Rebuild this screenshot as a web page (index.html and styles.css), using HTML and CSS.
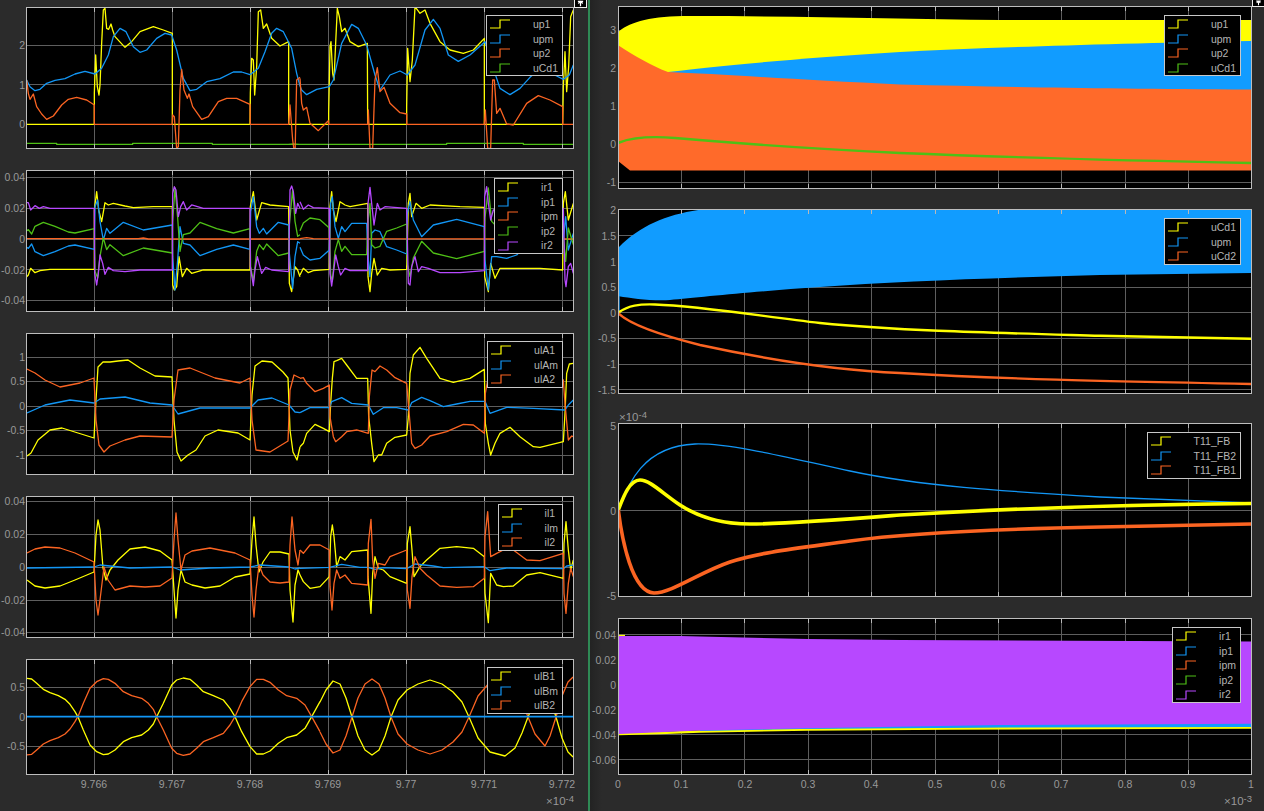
FILE: index.html
```html
<!doctype html>
<html lang="en">
<head>
  <meta charset="UTF-8">
  <meta name="viewport" content="width=device-width, initial-scale=1.0">
  <title>Scope</title>
  <link rel="stylesheet" href="styles.css">
</head>
<body>
<main class="scope">

  <!-- left pane: zoomed-in waveforms -->
  <section class="pane pane-left">
    <button class="undock"><svg viewBox="0 0 12 8"><path d="M6 7V2M3.5 4 6 1.5 8.5 4M3 1.5h6"/></svg></button>

    <figure class="plot">
      <svg class="axes" width="574" height="142" viewBox="0 7 574 142">
        <defs>
          <path id="l1x" d="M94.5 8V148M172.5 8V148M250.5 8V148M328.5 8V148M406.5 8V148M484.5 8V148M562.5 8V148"/>
          <path id="l1y" d="M27 45.5H573M27 84.5H573M27 124.5H573"/>
        </defs>
        <rect class="bg" x="26" y="7" width="548" height="142"/>
        <use href="#l1x" class="grid"/><use href="#l1y" class="grid"/>
        <svg x="27" y="8" width="546" height="140" viewBox="27 8 546 140">
          <g transform="scale(.33333)">
            <polyline class="line green" points="80,430 170,430 170,433 398,433 398,430 637,430 637,433 865,433 880,432 900,433"/>
            <polyline class="line yellow" points="80,373 283,373 283,280 287,165 292,260 297,285 300,255 305,130 310,30 315,25 320,85 326,88 333,72 338,90 345,110 375,142 395,125 420,95 460,80 490,90 517,100 517,373 750,373 751,280 755,175 760,180 764,285 770,200 775,35 782,30 790,85 800,72 815,115 840,138 866,125 866,373 900,373"/>
            <polyline class="line blue" points="80,240 90,260 105,272 120,268 140,250 165,241 195,236 225,222 255,214 285,222 305,205 325,165 340,110 360,85 378,95 400,140 420,157 440,150 470,115 495,100 515,105 530,150 550,235 570,272 590,268 620,245 660,236 700,216 725,216 750,224 775,205 795,155 815,100 830,85 850,95 875,145 890,220 900,258"/>
            <polyline class="line orange" points="80,240 85,280 90,298 100,282 110,320 125,342 140,358 160,348 185,315 205,298 230,292 260,300 283,315 283,373 517,373 518,345 523,350 530,446 535,440 540,270 545,208 552,270 562,295 567,282 578,320 605,358 625,350 655,305 680,295 710,295 750,313 751,373 866,373 870,315 878,420 885,470 890,240 900,232"/>
          </g>
          <g transform="translate(300 0) scale(.33333)">
            <polyline class="line green" points="0,433 440,433 440,430 670,430 670,433 820,433"/>
            <polyline class="line yellow" points="0,373 86,373 86,340 90,140 93,125 98,220 102,240 106,150 112,25 118,50 125,95 135,85 150,125 175,140 202,130 203,373 320,373 320,320 323,145 330,245 337,180 345,20 360,40 375,30 390,70 420,125 450,150 490,160 520,150 553,115 553,373 788,373 790,260 795,155 800,275 806,200 812,50 820,30"/>
            <polyline class="line blue" points="0,258 5,270 20,284 50,268 88,260 100,240 125,130 155,73 175,85 200,135 225,225 240,270 270,225 300,213 322,225 345,195 375,90 400,58 420,85 445,165 475,184 510,165 555,125 575,190 600,265 630,284 660,265 690,232 720,205 770,228 790,238 808,225 820,195"/>
            <polyline class="line orange" points="0,235 5,310 10,330 20,322 30,370 55,392 85,362 86,373 203,373 205,330 210,445 218,445 225,240 232,203 240,275 252,262 270,310 300,338 320,342 320,373 553,373 556,330 563,445 572,445 578,240 583,240 590,340 600,325 620,372 640,375 680,310 715,287 750,300 788,320 788,373 820,373"/>
          </g>
        </svg>
        <use href="#l1x" class="ticks" stroke-dasharray="4 132 4"/>
        <rect class="box" x="26.5" y="7.5" width="547" height="141"/>
        <text class="tick ylab" x="25" y="45">2</text>
        <text class="tick ylab" x="25" y="84.5">1</text>
        <text class="tick ylab" x="25" y="124">0</text>
      </svg>
      <div class="legend">
        <div class="entry"><svg class="key yellow"><path d="M0 9H10V1H20"/></svg><span>up1</span></div>
        <div class="entry"><svg class="key blue"><path d="M0 9H10V1H20"/></svg><span>upm</span></div>
        <div class="entry"><svg class="key orange"><path d="M0 9H10V1H20"/></svg><span>up2</span></div>
        <div class="entry"><svg class="key green"><path d="M0 9H10V1H20"/></svg><span>uCd1</span></div>
      </div>
    </figure>

    <figure class="plot">
      <svg class="axes" width="574" height="142" viewBox="0 170 574 142">
        <defs>
          <path id="l2x" d="M94.5 171V311M172.5 171V311M250.5 171V311M328.5 171V311M406.5 171V311M484.5 171V311M562.5 171V311"/>
          <path id="l2y" d="M27 177.5H573M27 208.5H573M27 239.5H573M27 269.5H573M27 300.5H573"/>
        </defs>
        <rect class="bg" x="26" y="170" width="548" height="142"/>
        <use href="#l2x" class="grid"/><use href="#l2y" class="grid"/>
        <svg x="27" y="171" width="546" height="140" viewBox="27 171 546 140">
          <g transform="translate(0 160) scale(.33333)">
            <polyline class="line yellow" points="80,350 85,345 92,325 105,338 120,332 150,328 283,328 283,150 290,95 296,150 305,185 315,128 325,135 340,130 375,138 400,143 460,140 517,140 518,375 523,390 530,380 537,290 547,350 560,325 575,340 610,330 750,330 751,140 760,95 770,180 785,128 810,135 866,140 868,370 875,395 885,320 893,330 900,350"/>
            <polyline class="line blue" points="80,262 85,265 95,252 105,275 130,287 165,275 205,258 225,255 283,268 285,140 293,120 300,185 310,240 320,205 330,220 370,187 430,210 517,195 518,290 525,390 533,300 540,200 550,250 570,255 600,287 650,268 700,255 750,268 752,155 760,110 770,200 778,220 790,205 800,222 835,187 866,195 868,280 878,385 885,290 893,245 900,250"/>
            <polyline class="line orange" points="80,236 415,236 430,234 445,237 900,237"/>
            <polyline class="line green" points="80,212 85,209 95,222 105,199 130,187 165,199 205,216 225,219 283,206 285,334 293,354 300,289 310,234 320,269 330,254 370,287 430,264 517,279 518,184 525,84 533,174 540,274 550,224 570,219 600,187 650,206 700,219 750,206 752,319 760,364 770,274 778,254 790,269 800,252 835,287 866,279 868,194 878,89 885,184 893,229 900,224"/>
            <polyline class="line purple" points="80,128 85,128 92,150 105,137 118,145 130,140 150,145 283,145 284,340 290,375 295,340 300,285 308,310 315,343 325,322 340,332 375,335 420,330 517,330 518,100 523,80 528,90 535,170 542,140 550,125 560,150 575,135 610,145 750,145 751,320 760,377 765,330 772,290 785,340 797,322 815,330 866,335 870,90 875,78 880,95 887,160 893,130 900,145"/>
          </g>
          <g transform="translate(300 160) scale(.33333)">
            <polyline class="line yellow" points="0,345 10,325 25,338 40,332 88,328 90,140 95,95 100,150 108,185 120,125 135,135 150,140 203,130 204,350 210,395 215,340 222,295 232,345 245,325 270,330 320,328 325,130 330,100 335,170 348,130 365,145 390,135 480,140 553,142 554,350 565,395 572,310 585,355 600,325 650,325 720,325 788,330 790,130 796,95 805,180 820,130"/>
            <polyline class="line blue" points="0,262 10,285 30,300 60,295 88,270 92,130 97,110 105,200 115,235 125,200 135,215 155,190 200,190 204,290 210,350 215,220 225,210 240,215 260,260 290,270 320,282 322,160 330,125 340,180 365,230 400,195 470,178 553,200 555,300 565,390 575,290 590,290 620,295 650,285 700,230 790,240 797,170 805,270 820,220"/>
            <polyline class="line orange" points="0,236 20,233 40,236 820,237"/>
            <polyline class="line green" points="0,212 10,189 30,174 60,179 88,204 92,344 97,364 105,274 115,239 125,274 135,259 155,284 200,284 204,184 210,130 215,254 225,264 240,259 260,214 290,204 320,192 322,314 330,349 340,294 365,244 400,279 470,296 553,274 555,174 565,84 575,184 600,210 790,234 797,304 805,204 820,254"/>
            <polyline class="line purple" points="0,125 10,148 25,135 40,143 88,145 90,340 95,378 100,340 107,285 115,320 122,345 135,325 150,332 203,332 204,130 210,82 215,130 222,195 232,130 240,150 255,140 320,145 325,370 330,375 335,320 345,290 355,335 365,320 385,325 420,338 480,338 553,332 554,110 560,80 565,130 572,180 580,150 790,145 795,360 798,380 805,320 812,310 820,340"/>
          </g>
        </svg>
        <use href="#l2x" class="ticks" stroke-dasharray="4 132 4"/>
        <rect class="box" x="26.5" y="170.5" width="547" height="141"/>
        <text class="tick ylab" x="25" y="177">0.04</text>
        <text class="tick ylab" x="25" y="208">0.02</text>
        <text class="tick ylab" x="25" y="239">0</text>
        <text class="tick ylab" x="25" y="270">-0.02</text>
        <text class="tick ylab" x="25" y="300">-0.04</text>
      </svg>
      <div class="legend">
        <div class="entry"><svg class="key yellow"><path d="M0 9H10V1H20"/></svg><span>ir1</span></div>
        <div class="entry"><svg class="key blue"><path d="M0 9H10V1H20"/></svg><span>ip1</span></div>
        <div class="entry"><svg class="key orange"><path d="M0 9H10V1H20"/></svg><span>ipm</span></div>
        <div class="entry"><svg class="key green"><path d="M0 9H10V1H20"/></svg><span>ip2</span></div>
        <div class="entry"><svg class="key purple"><path d="M0 9H10V1H20"/></svg><span>ir2</span></div>
      </div>
    </figure>

    <figure class="plot">
      <svg class="axes" width="574" height="142" viewBox="0 333 574 142">
        <defs>
          <path id="l3x" d="M94.5 334V474M172.5 334V474M250.5 334V474M328.5 334V474M406.5 334V474M484.5 334V474M562.5 334V474"/>
          <path id="l3y" d="M27 357.5H573M27 381.5H573M27 406.5H573M27 430.5H573M27 455.5H573"/>
        </defs>
        <rect class="bg" x="26" y="333" width="548" height="142"/>
        <use href="#l3x" class="grid"/><use href="#l3y" class="grid"/>
        <svg x="27" y="334" width="546" height="140" viewBox="27 334 546 140">
          <polyline class="line yellow" points="27,456 31,453 38,440 50,430 62,428 78,433 94,438 96,400 98,367 103,362 110,362 118,361 128,360 140,368 155,376 172,377 174,420 177,452 181,461 188,455 196,450 205,436 218,430 238,433 250,440 252,395 255,366 262,361 272,362 283,372 288,378 290,430 293,452 297,460 300,447"/>
          <polyline class="line blue" points="27,413 45,405 70,400 94,403 100,399 125,397 150,403 172,405 178,414 200,408 250,408 258,400 272,398 289,405 295,412 300,412.7"/>
          <polyline class="line orange" points="27,369 35,373 45,380 60,387 80,383 94,378 96,420 99,445 104,452 110,446 125,440 140,436 172,437 174,400 178,370 190,368 215,378 240,383 250,378 252,420 256,450 270,452 288,441 290,390 294,375 300,378"/>
          <g transform="translate(300 330) scale(.33333)">
            <polyline class="line yellow" points="0,350 10,340 20,310 45,283 70,295 88,305 92,220 97,145 102,95 110,92 125,85 140,105 170,145 203,145 206,260 215,340 222,395 235,375 245,375 260,340 285,322 320,315 325,260 330,130 340,75 360,52 380,85 420,145 460,157 510,145 553,118 556,280 565,340 572,375 585,340 600,310 630,292 660,320 700,350 720,352 790,335 795,250 800,130 808,102 820,100"/>
            <polyline class="line blue" points="0,248 30,233 88,233 95,215 125,203 155,220 205,225 220,253 250,233 290,233 325,240 335,218 365,202 390,212 430,230 470,222 510,214 555,214 570,250 620,232 700,235 795,240 805,225 820,210"/>
            <polyline class="line orange" points="0,145 10,143 20,160 45,185 70,175 88,165 90,260 100,320 107,335 125,320 140,305 170,300 205,310 208,200 216,120 225,125 240,108 260,120 285,143 320,160 325,220 335,340 345,355 365,345 390,318 440,305 490,283 520,285 553,310 556,190 565,140 600,100 790,150 795,220 805,330 815,318 820,320"/>
          </g>
        </svg>
        <use href="#l3x" class="ticks" stroke-dasharray="4 132 4"/>
        <rect class="box" x="26.5" y="333.5" width="547" height="141"/>
        <text class="tick ylab" x="25" y="357">1</text>
        <text class="tick ylab" x="25" y="381">0.5</text>
        <text class="tick ylab" x="25" y="406">0</text>
        <text class="tick ylab" x="25" y="430">-0.5</text>
        <text class="tick ylab" x="25" y="455">-1</text>
      </svg>
      <div class="legend">
        <div class="entry"><svg class="key yellow"><path d="M0 9H10V1H20"/></svg><span>ulA1</span></div>
        <div class="entry"><svg class="key blue"><path d="M0 9H10V1H20"/></svg><span>ulAm</span></div>
        <div class="entry"><svg class="key orange"><path d="M0 9H10V1H20"/></svg><span>ulA2</span></div>
      </div>
    </figure>

    <figure class="plot">
      <svg class="axes" width="574" height="142" viewBox="0 496 574 142">
        <defs>
          <path id="l4x" d="M94.5 497V637M172.5 497V637M250.5 497V637M328.5 497V637M406.5 497V637M484.5 497V637M562.5 497V637"/>
          <path id="l4y" d="M27 501.5H573M27 534.5H573M27 567.5H573M27 600.5H573M27 632.5H573"/>
        </defs>
        <rect class="bg" x="26" y="496" width="548" height="142"/>
        <use href="#l4x" class="grid"/><use href="#l4y" class="grid"/>
        <svg x="27" y="497" width="546" height="140" viewBox="27 497 546 140">
          <polyline class="line yellow" points="27,580 35,586 45,588 60,586 75,580 94,572 96,535 98,520 100,530 103,568 106,580 110,570 118,560 130,549 145,547 160,551 172,560 174,590 176,618 178,590 181,570 185,582 192,585 205,588 220,586 235,577 250,574 252,540 254,517 256,545 259,572 263,562 270,552 280,552 289,554 290,590 293,622 295,585 298,570 300,575"/>
          <polyline class="line blue" points="27,568 94,567 100,565 130,568 172,567 180,570 210,568 250,567 260,565 289,567 295,569 300,568"/>
          <polyline class="line orange" points="27,553 35,549 45,547 60,548 75,553 94,562 96,600 98,615 100,600 104,567 108,580 115,590 130,586 145,587 160,586 172,578 174,540 176,513 178,540 181,570 185,555 192,551 210,548 235,553 250,560 252,595 254,617 256,590 259,565 263,575 270,582 280,583 289,582 290,545 292,517 295,550 298,565 300,550"/>
          <g transform="translate(300 330) scale(.33333)">
            <polyline class="line yellow" points="0,735 10,755 30,775 60,770 88,740 92,620 97,585 102,620 110,710 120,680 135,690 155,665 203,660 204,740 213,850 218,730 225,680 235,715 250,720 270,740 320,760 322,640 330,590 336,660 342,740 360,710 380,690 420,655 470,650 520,655 553,680 555,790 565,878 572,730 590,765 610,770 640,768 680,735 720,728 790,745 792,640 798,575 805,660 812,720 820,690"/>
            <polyline class="line blue" points="0,715 88,712 125,703 180,712 205,712 225,718 250,713 320,716 345,702 400,708 430,713 553,710 570,722 620,714 790,716 800,708 820,705"/>
            <polyline class="line orange" points="0,660 10,670 30,645 60,645 88,660 90,770 96,840 102,760 110,720 120,745 135,735 155,760 203,765 205,640 213,568 218,690 225,745 235,700 255,705 270,680 320,660 322,780 330,835 336,740 345,680 360,715 380,735 420,768 470,772 520,770 553,745 555,620 563,545 572,680 590,670 610,660 640,660 680,690 720,692 790,670 792,790 798,850 805,760 812,715 820,740"/>
          </g>
        </svg>
        <use href="#l4x" class="ticks" stroke-dasharray="4 132 4"/>
        <rect class="box" x="26.5" y="496.5" width="547" height="141"/>
        <text class="tick ylab" x="25" y="501">0.04</text>
        <text class="tick ylab" x="25" y="534">0.02</text>
        <text class="tick ylab" x="25" y="567">0</text>
        <text class="tick ylab" x="25" y="600">-0.02</text>
        <text class="tick ylab" x="25" y="632">-0.04</text>
      </svg>
      <div class="legend">
        <div class="entry"><svg class="key yellow"><path d="M0 9H10V1H20"/></svg><span>il1</span></div>
        <div class="entry"><svg class="key blue"><path d="M0 9H10V1H20"/></svg><span>ilm</span></div>
        <div class="entry"><svg class="key orange"><path d="M0 9H10V1H20"/></svg><span>il2</span></div>
      </div>
    </figure>

    <figure class="plot">
      <svg class="axes" width="574" height="116" viewBox="0 659 574 116">
        <defs>
          <path id="l5x" d="M94.5 660V774M172.5 660V774M250.5 660V774M328.5 660V774M406.5 660V774M484.5 660V774M562.5 660V774"/>
          <path id="l5y" d="M27 687.5H573M27 746.5H573"/>
        </defs>
        <rect class="bg" x="26" y="659" width="548" height="116"/>
        <use href="#l5x" class="grid"/><use href="#l5y" class="grid"/>
        <svg x="27" y="660" width="546" height="114" viewBox="27 660 546 114">
          <g transform="translate(0 650) scale(.33333)">
            <polyline class="line yellow" points="80,85 95,87 110,100 130,118 150,128 175,137 195,148 210,163 225,185 235,203 250,240 270,285 290,305 310,314 325,312 345,300 370,275 395,263 425,255 445,240 460,222 470,200 490,160 515,105 530,90 550,84 570,88 590,105 610,125 640,137 670,150 690,175 705,200 725,245 750,290 770,312 790,312 810,303 835,280 860,263 890,255 915,235 935,200 960,155"/>
            <polyline class="line orange" points="80,315 95,313 110,300 130,282 150,272 175,263 195,252 210,237 225,215 235,197 250,160 270,115 290,95 310,86 325,88 345,100 370,125 395,137 425,145 445,160 460,178 470,200 490,240 515,295 530,310 550,316 570,312 590,295 610,275 640,263 670,250 690,225 705,200 725,155 750,110 770,88 790,88 810,97 835,120 860,137 890,145 915,165 935,200 960,245"/>
          </g>
          <polyline class="line yellow" points="320,702 326,690 333,681 340,684 346,698 352,717 358,736 365,750 372,755 379,750 385,736 391,717 398,700 407,690 418,684 430,680 442,684 453,692 462,702 469,717 478,738 490,752 505,756 515,748 522,733 528,717 535,700 545,688 550,698 556,717 562,738 568,752 573,757"/>
          <polyline class="line orange" points="320,732 326,744 333,753 340,750 346,736 352,717 358,698 365,684 372,679 379,684 385,698 391,717 398,734 407,744 418,750 430,754 442,750 453,742 462,732 469,717 478,696 490,682 505,678 515,686 522,701 528,717 535,734 545,746 550,736 556,717 562,696 568,682 573,677"/>
          <path class="line blue thick" d="M27 716.7H573"/>
        </svg>
        <use href="#l5x" class="ticks" stroke-dasharray="4 106 4"/>
        <rect class="box" x="26.5" y="659.5" width="547" height="115"/>
        <text class="tick ylab" x="25" y="687">0.5</text>
        <text class="tick ylab" x="25" y="717">0</text>
        <text class="tick ylab" x="25" y="746">-0.5</text>
        <text class="tick xlab" x="94" y="784">9.766</text>
        <text class="tick xlab" x="172" y="784">9.767</text>
        <text class="tick xlab" x="250" y="784">9.768</text>
        <text class="tick xlab" x="328" y="784">9.769</text>
        <text class="tick xlab" x="406" y="784">9.77</text>
        <text class="tick xlab" x="484" y="784">9.771</text>
        <text class="tick xlab" x="562" y="784">9.772</text>
        <text class="tick ylab mult" x="574" y="801">&#215;10<tspan class="exp" dy="-3">-4</tspan></text>
      </svg>
      <div class="legend">
        <div class="entry"><svg class="key yellow"><path d="M0 9H10V1H20"/></svg><span>ulB1</span></div>
        <div class="entry"><svg class="key blue"><path d="M0 9H10V1H20"/></svg><span>ulBm</span></div>
        <div class="entry"><svg class="key orange"><path d="M0 9H10V1H20"/></svg><span>ulB2</span></div>
      </div>
    </figure>
  </section>

  <div class="divider"></div>

  <!-- right pane: full run -->
  <section class="pane pane-right">
    <button class="undock"><svg viewBox="0 0 12 8"><path d="M6 7V2M3.5 4 6 1.5 8.5 4M3 1.5h6"/></svg></button>

    <figure class="plot plot-r1">
      <svg class="axes" width="662" height="183" viewBox="590 6 662 183">
        <defs>
          <path id="rx1" d="M681.5 7V188M744.5 7V188M808.5 7V188M871.5 7V188M935.5 7V188M998.5 7V188M1061.5 7V188M1125.5 7V188M1188.5 7V188"/>
          <path id="ry1" d="M619 30.5H1251M619 68.5H1251M619 106.5H1251M619 144.5H1251M619 182.5H1251"/>
        </defs>
        <rect class="bg" x="618" y="6" width="634" height="183"/>
        <use href="#rx1" class="grid"/><use href="#ry1" class="grid"/>
        <svg x="619" y="7" width="632" height="181" viewBox="619 7 632 181">
          <path class="fill-yellow" d="M618 32C630 22 650 16 690 16C800 16 900 19 1000 20H1252V76H618Z"/>
          <path class="fill-blue" d="M668 72C720 66 800 58 900 52C1000 47 1100 44 1252 41V100H668Z"/>
          <path class="fill-orange" d="M618 45C635 56 650 65 668 72C720 74 800 80 900 84.5C1000 87 1100 88.5 1252 89.5V170.5H630L618 161Z"/>
          <path class="line green mid" d="M618 143C630 138 650 136 675 138C720 142 800 148 900 153C1000 157 1100 160 1252 163"/>
        </svg>
        <use href="#rx1" class="ticks" stroke-dasharray="4 173 4"/>
        <rect class="box" x="618.5" y="6.5" width="633" height="182"/>
        <text class="tick ylab" x="616" y="30">3</text>
        <text class="tick ylab" x="616" y="68">2</text>
        <text class="tick ylab" x="616" y="106">1</text>
        <text class="tick ylab" x="616" y="144">0</text>
        <text class="tick ylab" x="616" y="182">-1</text>
      </svg>
      <div class="legend">
        <div class="entry"><svg class="key yellow"><path d="M0 9H10V1H20"/></svg><span>up1</span></div>
        <div class="entry"><svg class="key blue"><path d="M0 9H10V1H20"/></svg><span>upm</span></div>
        <div class="entry"><svg class="key orange"><path d="M0 9H10V1H20"/></svg><span>up2</span></div>
        <div class="entry"><svg class="key green"><path d="M0 9H10V1H20"/></svg><span>uCd1</span></div>
      </div>
    </figure>

    <figure class="plot plot-r2">
      <svg class="axes" width="662" height="185" viewBox="590 209 662 185">
        <defs>
          <path id="rx2" d="M681.5 210V393M744.5 210V393M808.5 210V393M871.5 210V393M935.5 210V393M998.5 210V393M1061.5 210V393M1125.5 210V393M1188.5 210V393"/>
          <path id="ry2" d="M619 235.5H1251M619 261.5H1251M619 287.5H1251M619 312.5H1251M619 338.5H1251M619 364.5H1251M619 389.5H1251"/>
        </defs>
        <rect class="bg" x="618" y="209" width="634" height="185"/>
        <use href="#rx2" class="grid"/><use href="#ry2" class="grid"/>
        <svg x="619" y="210" width="632" height="183" viewBox="619 210 632 183">
          <path class="fill-blue" d="M618 248C640 225 670 213 706 209H1252V273L1100 275C1000 278 900 281 820 287C760 291 700 297 670 300C650 301 630 298 618 296Z"/>
          <path class="line blue" d="M619 296V313"/>
          <path class="line yellow mid" d="M618 313C628 305 640 304 655 304.5C700 306 760 316 820 323C900 331 1000 333 1100 335.7L1252 338.7"/>
          <path class="line orange mid" d="M618 313C630 325 660 335 700 345C760 358 830 370 900 373C1000 379 1100 381 1252 384"/>
        </svg>
        <use href="#rx2" class="ticks" stroke-dasharray="4 175 4"/>
        <rect class="box" x="618.5" y="209.5" width="633" height="184"/>
        <text class="tick ylab" x="616" y="210">2</text>
        <text class="tick ylab" x="616" y="236">1.5</text>
        <text class="tick ylab" x="616" y="262">1</text>
        <text class="tick ylab" x="616" y="287">0.5</text>
        <text class="tick ylab" x="616" y="313">0</text>
        <text class="tick ylab" x="616" y="338">-0.5</text>
        <text class="tick ylab" x="616" y="364">-1</text>
        <text class="tick ylab" x="616" y="390">-1.5</text>
      </svg>
      <div class="legend">
        <div class="entry"><svg class="key yellow"><path d="M0 9H10V1H20"/></svg><span>uCd1</span></div>
        <div class="entry"><svg class="key blue"><path d="M0 9H10V1H20"/></svg><span>upm</span></div>
        <div class="entry"><svg class="key orange"><path d="M0 9H10V1H20"/></svg><span>uCd2</span></div>
      </div>
    </figure>

    <figure class="plot plot-r3">
      <svg class="axes" width="662" height="174" viewBox="590 423 662 174">
        <defs>
          <path id="rx3" d="M681.5 424V596M744.5 424V596M808.5 424V596M871.5 424V596M935.5 424V596M998.5 424V596M1061.5 424V596M1125.5 424V596M1188.5 424V596"/>
          <path id="ry3" d="M619 510.5H1251"/>
        </defs>
        <rect class="bg" x="618" y="423" width="634" height="174"/>
        <use href="#rx3" class="grid"/><use href="#ry3" class="grid"/>
        <svg x="619" y="424" width="632" height="172" viewBox="619 424 632 172">
          <path class="line blue" d="M618.3 510C626 490 640 446 695 444C730 443 790 458 850 471C920 486 1000 491 1100 497C1150 499 1200 501 1252 503"/>
          <path class="line yellow wide" d="M618.3 510C624 495 630 480 640 480C650 480 662 493 680 505C700 518 723 524 750 524C790 524 850 519 900 515C1000 509 1100 505 1252 503.5"/>
          <path class="line orange wide" d="M618.3 510C622 540 632 592 654 593C672 593 700 572 730 562C760 552 800 548 850 541C900 534 1000 529 1100 527C1150 526 1200 525 1252 524"/>
        </svg>
        <use href="#rx3" class="ticks" stroke-dasharray="4 164 4"/>
        <rect class="box" x="618.5" y="423.5" width="633" height="173"/>
        <text class="tick ylab" x="616" y="426">5</text>
        <text class="tick ylab" x="616" y="511">0</text>
        <text class="tick ylab" x="616" y="596">-5</text>
        <text class="tick mult" x="619" y="417" dominant-baseline="central">&#215;10<tspan class="exp" dy="-3">-4</tspan></text>
      </svg>
      <div class="legend">
        <div class="entry"><svg class="key yellow"><path d="M0 9H10V1H20"/></svg><span>T11_FB</span></div>
        <div class="entry"><svg class="key blue"><path d="M0 9H10V1H20"/></svg><span>T11_FB2</span></div>
        <div class="entry"><svg class="key orange"><path d="M0 9H10V1H20"/></svg><span>T11_FB1</span></div>
      </div>
    </figure>

    <figure class="plot plot-r4">
      <svg class="axes" width="662" height="157" viewBox="590 618 662 157">
        <defs>
          <path id="rx4" d="M681.5 619V774M744.5 619V774M808.5 619V774M871.5 619V774M935.5 619V774M998.5 619V774M1061.5 619V774M1125.5 619V774M1188.5 619V774"/>
          <path id="ry4" d="M619 634.5H1251M619 660.5H1251M619 685.5H1251M619 710.5H1251M619 734.5H1251M619 759.5H1251"/>
        </defs>
        <rect class="bg" x="618" y="618" width="634" height="157"/>
        <use href="#rx4" class="grid"/><use href="#ry4" class="grid"/>
        <svg x="619" y="619" width="632" height="155" viewBox="619 619 632 155">
          <path class="line yellow mid" d="M619 636H625"/>
          <polyline class="line yellow mid" points="618,734 660,733 700,731.5 808,729.5 950,728.5 1252,727.5"/>
          <polygon class="fill-blue" points="700,730 800,727 1000,723 1252,722 1252,727 1000,727.5 800,729 700,731"/>
          <polygon class="fill-purple" points="618,636 680,636 700,636.5 808,639 900,640 1252,641.5 1252,723.7 1000,725 808,728.3 700,730.5 618,734"/>
        </svg>
        <use href="#rx4" class="ticks" stroke-dasharray="4 147 4"/>
        <rect class="box" x="618.5" y="618.5" width="633" height="156"/>
        <text class="tick ylab" x="616" y="635">0.04</text>
        <text class="tick ylab" x="616" y="660">0.02</text>
        <text class="tick ylab" x="616" y="685">0</text>
        <text class="tick ylab" x="616" y="710">-0.02</text>
        <text class="tick ylab" x="616" y="735">-0.04</text>
        <text class="tick ylab" x="616" y="760">-0.06</text>
        <text class="tick xlab" x="618" y="784">0</text>
        <text class="tick xlab" x="681" y="784">0.1</text>
        <text class="tick xlab" x="745" y="784">0.2</text>
        <text class="tick xlab" x="808" y="784">0.3</text>
        <text class="tick xlab" x="871" y="784">0.4</text>
        <text class="tick xlab" x="935" y="784">0.5</text>
        <text class="tick xlab" x="998" y="784">0.6</text>
        <text class="tick xlab" x="1061" y="784">0.7</text>
        <text class="tick xlab" x="1125" y="784">0.8</text>
        <text class="tick xlab" x="1188" y="784">0.9</text>
        <text class="tick xlab" x="1251" y="784">1</text>
        <text class="tick ylab mult" x="1252" y="801">&#215;10<tspan class="exp" dy="-3">-3</tspan></text>
      </svg>
      <div class="legend">
        <div class="entry"><svg class="key yellow"><path d="M0 9H10V1H20"/></svg><span>ir1</span></div>
        <div class="entry"><svg class="key blue"><path d="M0 9H10V1H20"/></svg><span>ip1</span></div>
        <div class="entry"><svg class="key orange"><path d="M0 9H10V1H20"/></svg><span>ipm</span></div>
        <div class="entry"><svg class="key green"><path d="M0 9H10V1H20"/></svg><span>ip2</span></div>
        <div class="entry"><svg class="key purple"><path d="M0 9H10V1H20"/></svg><span>ir2</span></div>
      </div>
    </figure>
  </section>
</main>
</body>
</html>
```

FILE: styles.css
```css
* {
  margin: 0;
  padding: 0;
  box-sizing: border-box;
}

html, body {
  height: 100%;
}

body {
  background: #2b2b2b;
  overflow: hidden;
  font-family: "Liberation Sans", Arial, sans-serif;
}

.scope {
  display: flex;
  width: 1264px;
  height: 811px;
}

.pane {
  position: relative;
  display: flex;
  flex-direction: column;
}

.pane-left {
  width: 588px;
  padding-top: 7px;
  gap: 21px;
}

.pane-right {
  flex: 1;
  padding-top: 6px;
  background: linear-gradient(90deg, #232323, #2b2b2b 12px);
}

.divider {
  width: 2px;
  background: #2f8a55;
}

.plot {
  position: relative;
  width: 574px;
}

.pane-right .plot {
  width: 662px;
}

.plot-r2 { margin-top: 20px; }
.plot-r3 { margin-top: 29px; }
.plot-r4 { margin-top: 21px; }

.axes {
  display: block;
  overflow: visible;
}

/* axes */
.bg {
  fill: #000;
}

.grid {
  fill: none;
  stroke: #5e5e5e;
  stroke-width: 1;
}

.ticks {
  fill: none;
  stroke: #b8b8b8;
  stroke-width: 1;
}

.box {
  fill: none;
  stroke: #bdbdbd;
  stroke-width: 1;
}

.tick {
  fill: #999;
  font-size: 10.5px;
}

.ylab {
  text-anchor: end;
  dominant-baseline: central;
}

.xlab {
  text-anchor: middle;
  dominant-baseline: central;
}

.mult {
  font-size: 11.5px;
}

.exp {
  font-size: 9.5px;
}

/* traces */
.line {
  fill: none;
  stroke-width: 1.3;
  stroke-linejoin: round;
  vector-effect: non-scaling-stroke;
}

.thick { stroke-width: 1.8; }
.mid { stroke-width: 2.4; }
.wide { stroke-width: 3.6; }

.yellow { stroke: #ffff00; }
.blue { stroke: #1296f5; }
.orange { stroke: #fb6422; }
.green { stroke: #4fc016; }
.purple { stroke: #b748ff; }

.fill-yellow { fill: #ffff00; }
.fill-blue { fill: #119cff; }
.fill-orange { fill: #ff6a2a; }
.fill-purple { fill: #b748ff; }

/* legend */
.legend {
  position: absolute;
  top: 8px;
  right: 11px;
  padding: 1px 4px 0 3px;
  background: #000;
  border: 1px solid #c8c8c8;
  color: #b4b4b4;
  font-size: 10.5px;
}

.pane-right .legend {
  top: 9px;
}

.entry {
  display: flex;
  align-items: center;
  height: 14.6px;
  line-height: 14.6px;
}

.key {
  width: 21px;
  height: 10px;
  margin-right: 22px;
  fill: none;
  stroke-width: 1.2;
  flex: none;
}

/* undock button */
.undock {
  position: absolute;
  top: 0;
  display: block;
  width: 13px;
  height: 8px;
  background: #000;
  border: 1px solid #eee;
  border-top: none;
}

.pane-left .undock {
  right: 1px;
}

.pane-right .undock {
  right: -1px;
  height: 7px;
}

.undock svg {
  display: block;
  width: 100%;
  height: 100%;
  fill: none;
  stroke: #fff;
  stroke-width: 1.4;
}
```
